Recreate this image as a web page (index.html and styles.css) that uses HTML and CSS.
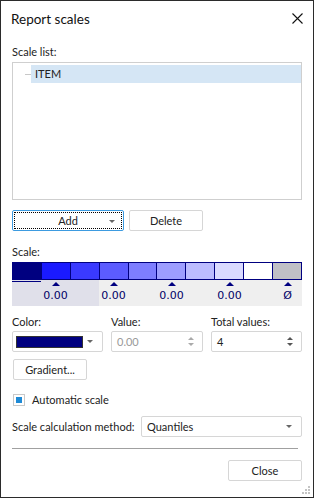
FILE: index.html
```html
<!DOCTYPE html>
<html lang="en">
<head>
    <meta charset="UTF-8">
    <title>Report scales</title>
    <link rel="stylesheet" href="styles.css">
</head>
<body>

    <div class="dialog">
        <div class="titlebar">
            <span class="title">Report scales</span>
            <svg class="close-icon" width="11" height="11" viewBox="0 0 11 11">
                <path d="M0.5 0.5 L10.5 10.5 M10.5 0.5 L0.5 10.5" stroke="#111" stroke-width="1.1" fill="none"/>
            </svg>
        </div>

        <div class="content">
            <div class="label label-list">Scale list:</div>
            <div class="tree">
                <div class="tree-row">
                    <span class="branch"></span>
                    <span class="tree-item">ITEM</span>
                </div>
            </div>

            <div class="btn-row">
                <div class="btn btn-add">
                    <div class="focus-rect">
                        <span>Add</span>
                        <span class="arrow arrow-add"></span>
                    </div>
                </div>
                <div class="btn btn-delete">Delete</div>
            </div>

            <div class="label label-scale">Scale:</div>
            <div class="scale-bar">
                <div class="cell" style="background:#000080"></div>
                <div class="cell" style="background:#1a1aff"></div>
                <div class="cell" style="background:#3a3aff"></div>
                <div class="cell" style="background:#5c5cff"></div>
                <div class="cell" style="background:#7e7eff"></div>
                <div class="cell" style="background:#9e9eff"></div>
                <div class="cell" style="background:#bcbcff"></div>
                <div class="cell" style="background:#dadaff"></div>
                <div class="cell" style="background:#ffffff"></div>
                <div class="cell" style="background:#c0c0c6"></div>
            </div>
            <div class="scale-marks">
                <div class="marks-hl"></div>
                <div class="marks-sel"></div>
                <div class="mark" style="grid-column:2"><span class="tri"></span><span>0.00</span></div>
                <div class="mark" style="grid-column:4"><span class="tri"></span><span>0.00</span></div>
                <div class="mark" style="grid-column:6"><span class="tri"></span><span>0.00</span></div>
                <div class="mark" style="grid-column:8"><span class="tri"></span><span>0.00</span></div>
                <div class="mark" style="grid-column:10"><span class="tri"></span><span>Ø</span></div>
            </div>

            <div class="fields">
                <div class="field">
                    <div class="label">Color:</div>
                    <div class="input">
                        <span class="swatch"></span>
                        <span class="arrow"></span>
                    </div>
                </div>
                <div class="field">
                    <div class="label">Value:</div>
                    <div class="input">
                        <span class="input-text disabled">0.00</span>
                        <span class="spin disabled"><span class="up"></span><span class="down"></span></span>
                    </div>
                </div>
                <div class="field">
                    <div class="label">Total values:</div>
                    <div class="input">
                        <span class="input-text">4</span>
                        <span class="spin"><span class="up"></span><span class="down"></span></span>
                    </div>
                </div>
            </div>

            <div class="btn btn-gradient">Gradient...</div>

            <div class="check-row">
                <span class="box"><span class="tick"></span></span>
                <span>Automatic scale</span>
            </div>

            <div class="method-row">
                <span class="method-label">Scale calculation method:</span>
                <div class="input combo">
                    <span class="input-text">Quantiles</span>
                    <span class="arrow"></span>
                </div>
            </div>

            <div class="separator"></div>

            <div class="footer">
                <div class="btn btn-close">Close</div>
            </div>
        </div>

        <!-- poignee de redimensionnement -->
        <svg class="grip" width="8" height="8" viewBox="0 0 8 8">
            <rect x="6" y="0" width="2" height="2" fill="#c4c4c4"/>
            <rect x="3" y="3" width="2" height="2" fill="#c4c4c4"/>
            <rect x="6" y="3" width="2" height="2" fill="#c4c4c4"/>
            <rect x="0" y="6" width="2" height="2" fill="#c4c4c4"/>
            <rect x="3" y="6" width="2" height="2" fill="#c4c4c4"/>
            <rect x="6" y="6" width="2" height="2" fill="#c4c4c4"/>
        </svg>
    </div>

</body>
</html>
```

FILE: styles.css
```css
body {
    margin: 0;
    padding: 0;
    background-color: #fff;
    font-family: 'Lato', 'Noto Sans', sans-serif;
    font-size: 11px;
    color: #222;
}

.dialog {
    position: relative;
    width: 312px;
    height: 496px;
    border: 1px solid #2b2b2b;
    background-color: #fff;
    display: flex;
    flex-direction: column;
}

.titlebar {
    height: 36px;
    display: flex;
    align-items: center;
    justify-content: space-between;
    padding: 0 10px 0 10px;
}

.title {
    font-size: 13.5px;
    color: #111;
}

.close-icon {
    display: block;
    margin-top: -2px;
}

.content {
    padding: 0 11px;
    display: flex;
    flex-direction: column;
}

.label {
    line-height: 16px;
    height: 16px;
    white-space: nowrap;
}

.label-list {
    margin-top: 7px;
    margin-bottom: 2px;
}

.tree {
    height: 134px;
    border: 1px solid #cfcfcf;
    padding-top: 2px;
    box-sizing: content-box;
}

.tree-row {
    display: flex;
    align-items: center;
    height: 18px;
}

.branch {
    width: 6px;
    height: 1px;
    margin-left: 12px;
    background-color: #c8c8c8;
}

.tree-item {
    flex-grow: 1;
    height: 18px;
    line-height: 18px;
    padding-left: 4px;
    background-color: #d5e6f5;
    color: #222;
}

.btn {
    box-sizing: border-box;
    height: 21px;
    border: 1px solid #d6d6d6;
    border-radius: 2px;
    background-color: #fff;
    display: flex;
    align-items: center;
    justify-content: center;
    color: #222;
}

.btn-row {
    display: flex;
    margin-top: 10px;
}

.btn-add {
    width: 112px;
    border-color: #3d9be0;
    padding: 1px;
}

.focus-rect {
    box-sizing: border-box;
    width: 100%;
    height: 100%;
    border: 1px dotted #000;
    display: flex;
    align-items: center;
    justify-content: center;
    position: relative;
}

.arrow {
    width: 0;
    height: 0;
    border-left: 3px solid transparent;
    border-right: 3px solid transparent;
    border-top: 3px solid #666;
}

.arrow-add {
    position: absolute;
    right: 6px;
    top: 7px;
}

.btn-delete {
    width: 74px;
    margin-left: 5px;
}

.label-scale {
    margin-top: 13px;
    margin-bottom: 2px;
}

.scale-bar {
    display: grid;
    grid-template-columns: repeat(10, 1fr);
    gap: 1px;
    padding: 1px;
    height: 16px;
    background-color: #000080;
}

.scale-marks {
    display: grid;
    grid-template-columns: repeat(10, 1fr);
    grid-template-rows: 26px;
    background-color: #efefef;
    font-family: 'DejaVu Sans', sans-serif;
    font-size: 11px;
    color: #000066;
}

.marks-hl {
    grid-column: 1 / 4;
    grid-row: 1;
    background-color: #e0e0ea;
}

.marks-sel {
    grid-column: 1;
    grid-row: 1;
    height: 1px;
    margin-top: 1px;
    background-color: #000080;
}

.mark {
    grid-row: 1;
    display: flex;
    flex-direction: column;
    align-items: center;
    padding-top: 2px;
    line-height: 14px;
    white-space: nowrap;
}

.tri {
    width: 0;
    height: 0;
    border-left: 4px solid transparent;
    border-right: 4px solid transparent;
    border-bottom: 4px solid #000080;
    margin-bottom: 3px;
}

.fields {
    display: grid;
    grid-template-columns: 91px 92px 91px;
    gap: 8px;
    margin-top: 8px;
}

.field .label {
    margin-bottom: 1px;
}

.input {
    box-sizing: border-box;
    height: 21px;
    border: 1px solid #d6d6d6;
    border-radius: 2px;
    display: flex;
    align-items: center;
    justify-content: space-between;
    padding: 0 9px 0 5px;
}

.swatch {
    width: 67px;
    height: 12px;
    margin-left: -2px;
    background-color: #000080;
    border: 1px solid #333;
    box-sizing: border-box;
}

.input-text {
    color: #222;
}

.input-text.disabled {
    color: #999;
}

.spin {
    display: flex;
    flex-direction: column;
    gap: 3px;
    margin-right: -1px;
}

.spin .up {
    border-left: 3px solid transparent;
    border-right: 3px solid transparent;
    border-bottom: 3px solid #555;
}

.spin .down {
    border-left: 3px solid transparent;
    border-right: 3px solid transparent;
    border-top: 3px solid #555;
}

.spin.disabled .up {
    border-bottom-color: #aaa;
}

.spin.disabled .down {
    border-top-color: #aaa;
}

.btn-gradient {
    width: 74px;
    margin-top: 7px;
    margin-left: 1px;
}

.check-row {
    display: flex;
    align-items: center;
    height: 16px;
    line-height: 16px;
    margin-top: 12px;
}

.box {
    box-sizing: border-box;
    width: 12px;
    height: 12px;
    margin-left: 1px;
    margin-right: 7px;
    border: 1px solid #c9c9c9;
    display: flex;
    align-items: center;
    justify-content: center;
}

.tick {
    width: 6px;
    height: 6px;
    background-color: #1e8ad6;
}

.method-row {
    display: flex;
    align-items: center;
    margin-top: 8px;
}

.method-label {
    flex: 0 0 129px;
    white-space: nowrap;
}

.combo {
    flex-grow: 1;
}

.separator {
    height: 1px;
    width: 286px;
    margin-top: 11px;
    background-color: #a0a0a0;
}

.footer {
    display: flex;
    justify-content: flex-end;
    margin-top: 11px;
}

.btn-close {
    width: 74px;
}

.grip {
    position: absolute;
    right: 3px;
    bottom: 3px;
}
```
